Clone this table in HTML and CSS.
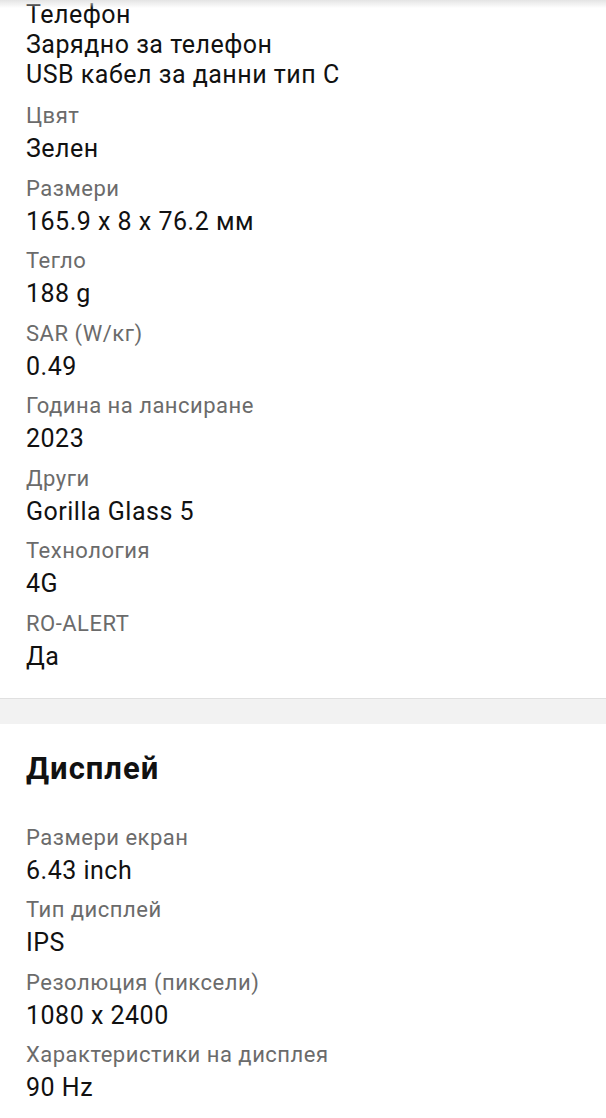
FILE: index.html
```html
<!DOCTYPE html>
<html lang="bg">
<head>
<meta charset="utf-8">
<link rel="stylesheet" href="styles.css">
</head>
<body>
<div class="topshadow"></div>
<section class="specs first">
  <div class="item lead">
    <div class="value multi">
      <div>Телефон</div>
      <div>Зарядно за телефон</div>
      <div>USB кабел за данни тип C</div>
    </div>
  </div>
  <div class="item"><div class="label">Цвят</div><div class="value">Зелен</div></div>
  <div class="item"><div class="label">Размери</div><div class="value">165.9 x 8 x 76.2 мм</div></div>
  <div class="item"><div class="label">Тегло</div><div class="value">188 g</div></div>
  <div class="item"><div class="label">SAR (W/кг)</div><div class="value">0.49</div></div>
  <div class="item"><div class="label">Година на лансиране</div><div class="value">2023</div></div>
  <div class="item"><div class="label">Други</div><div class="value">Gorilla Glass 5</div></div>
  <div class="item"><div class="label">Технология</div><div class="value">4G</div></div>
  <div class="item"><div class="label">RO-ALERT</div><div class="value">Да</div></div>
</section>
<div class="divider"></div>
<section class="specs">
  <h2 class="title">Дисплей</h2>
  <div class="item"><div class="label">Размери екран</div><div class="value">6.43 inch</div></div>
  <div class="item"><div class="label">Тип дисплей</div><div class="value">IPS</div></div>
  <div class="item"><div class="label">Резолюция (пиксели)</div><div class="value">1080 x 2400</div></div>
  <div class="item"><div class="label">Характеристики на дисплея</div><div class="value">90 Hz</div></div>
</section>
</body>
</html>
```

FILE: styles.css
```css
html, body {
  margin: 0;
  padding: 0;
  background: #fff;
  font-family: Roboto, "Noto Sans", sans-serif;
  overflow: hidden;
}
.topshadow {
  position: fixed;
  top: 0;
  left: 0;
  right: 0;
  height: 8px;
  background: linear-gradient(#e4e4e4, rgba(255,255,255,0));
  z-index: 2;
}
.specs {
  padding: 0 26px 26px;
}
.item {
  display: flex;
  flex-direction: column;
  gap: 4px;
  margin-bottom: 10.5px;
}
.item.lead {
  margin-bottom: 12px;
}
.item:last-child {
  margin-bottom: 0;
}
.label {
  font-size: 22px;
  line-height: 28px;
  letter-spacing: 0.5px;
  color: #6b6b6b;
}
.value {
  font-size: 25px;
  line-height: 30px;
  letter-spacing: 0.5px;
  color: #111;
}
.divider {
  height: 25px;
  background: #f2f2f2;
  border-top: 1px solid #e0e0e0;
}
.title {
  margin: 0;
  padding: 28px 0 38px;
  font-size: 31px;
  line-height: 34px;
  letter-spacing: 1px;
  font-weight: 700;
  color: #111;
}
```
